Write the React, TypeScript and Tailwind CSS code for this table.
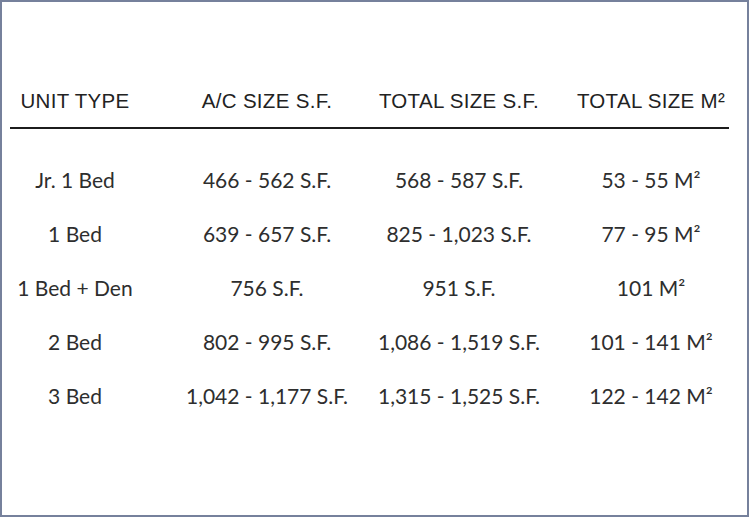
const rows = [
  ["Jr. 1 Bed", "466 - 562 S.F.", "568 - 587 S.F.", "53 - 55 M²"],
  ["1 Bed", "639 - 657 S.F.", "825 - 1,023 S.F.", "77 - 95 M²"],
  ["1 Bed + Den", "756 S.F.", "951 S.F.", "101 M²"],
  ["2 Bed", "802 - 995 S.F.", "1,086 - 1,519 S.F.", "101 - 141 M²"],
  ["3 Bed", "1,042 - 1,177 S.F.", "1,315 - 1,525 S.F.", "122 - 142 M²"],
];

const headers = ["UNIT TYPE", "A/C SIZE S.F.", "TOTAL SIZE S.F.", "TOTAL SIZE M²"];

const grid = "grid grid-cols-[repeat(4,146px)] gap-x-[46px]";

export default function App() {
  return (
    <div className="w-[749px] h-[517px] bg-white border-2 border-[#76819c] overflow-hidden">
      <div className="pt-[85px]">
        <div className={`${grid} font-['Liberation_Sans',Arial,sans-serif] text-[20.5px] leading-[28px] tracking-[0.3px] text-[#222]`}>
          {headers.map((h) => (
            <div key={h} className="flex justify-center whitespace-nowrap">
              {h}
            </div>
          ))}
        </div>
        <div className="ml-[8px] w-[719px] h-[2px] bg-[#1c1c1c] mt-[12px]" />
        <div className="pt-[35px] flex flex-col gap-y-[22px] font-['Lato',sans-serif] text-[21px] leading-[32px] text-[#2e2e2e]">
          {rows.map((r) => (
            <div key={r[0]} className={grid}>
              {r.map((c, i) => (
                <div key={i} className="flex justify-center whitespace-nowrap">
                  {c}
                </div>
              ))}
            </div>
          ))}
        </div>
      </div>
    </div>
  );
}
